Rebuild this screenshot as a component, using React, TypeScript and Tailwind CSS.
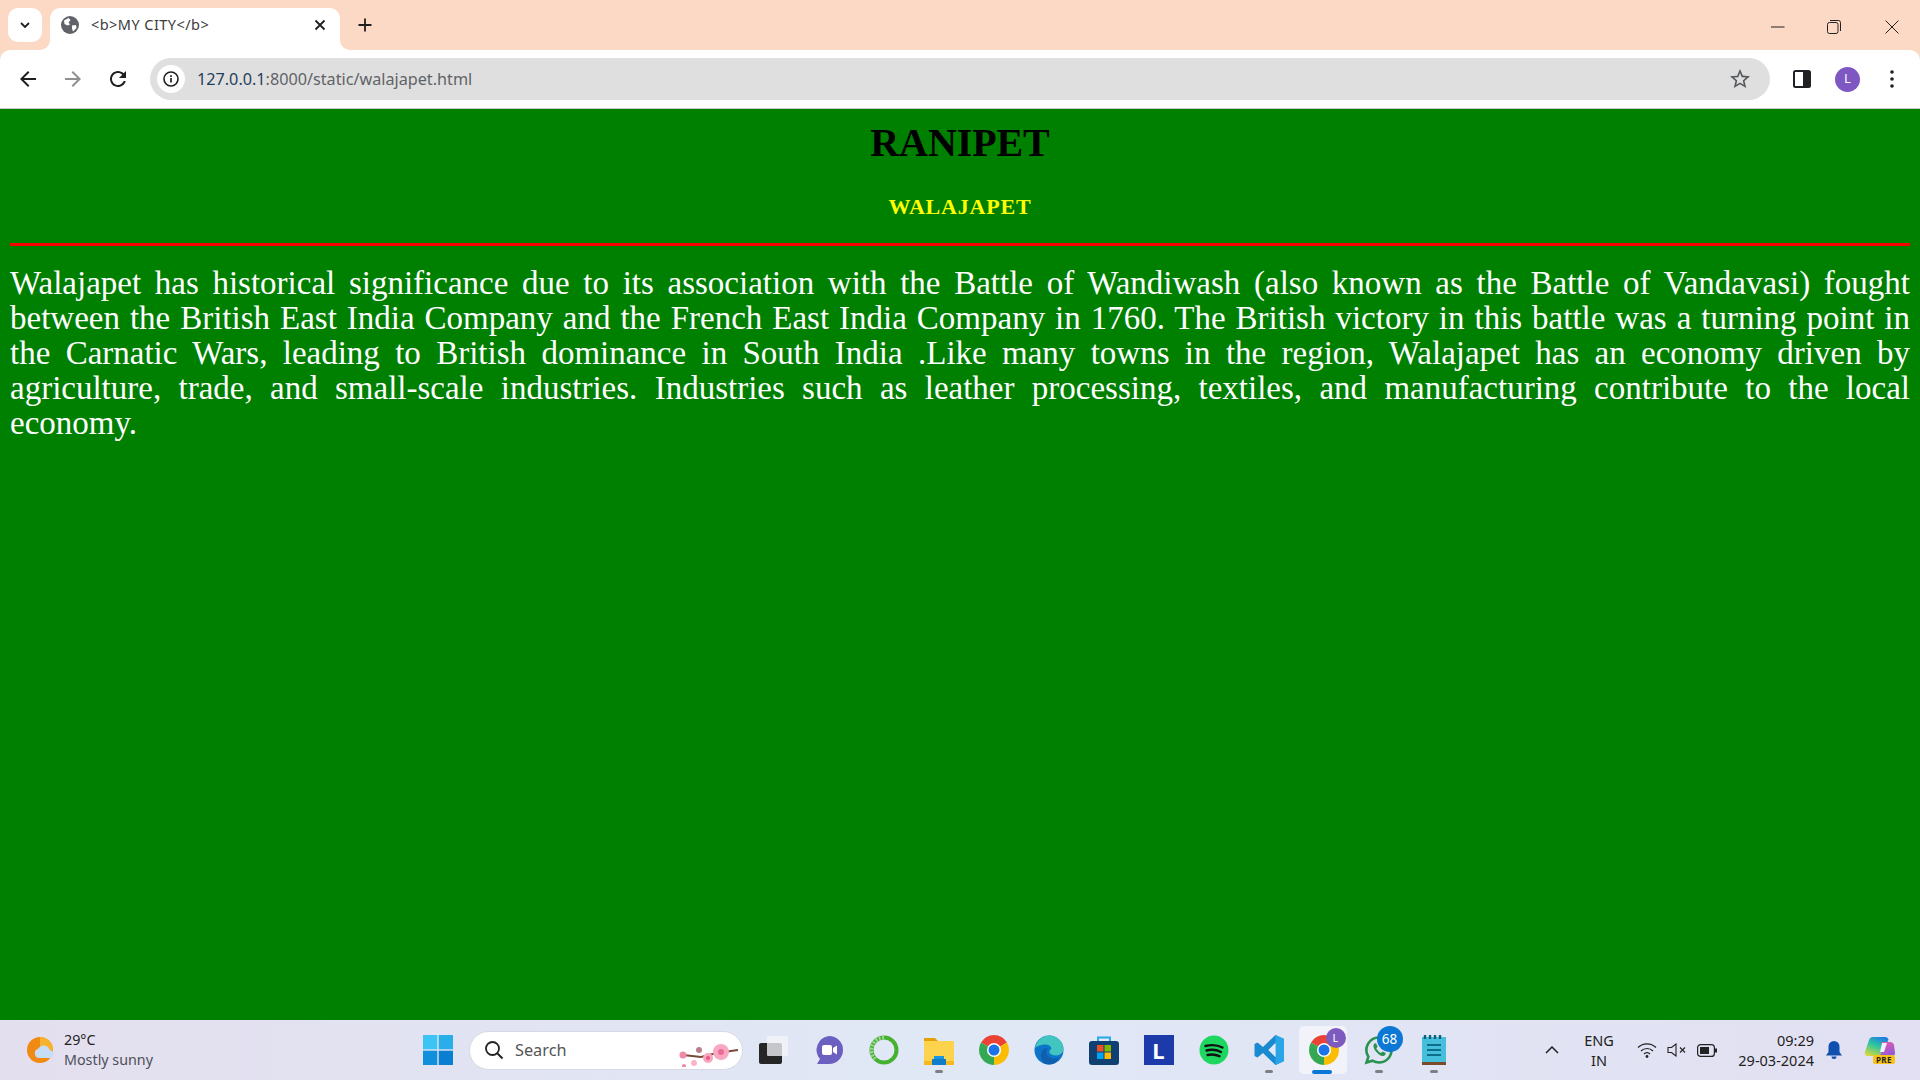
import React from "react";

const ui = "font-['Noto_Sans','Open_Sans',sans-serif]";

const Mi = ({ d, className, fill = "#1f1f1f" }: { d: string; className?: string; fill?: string }) => (
  <svg viewBox="0 0 24 24" className={className}><path d={d} fill={fill} /></svg>
);

const Chrome = ({ size = 30 }: { size?: number }) => (
  <svg width={size} height={size} viewBox="0 0 24 24">
    <path d="M12 12 L1.61 6 A12 12 0 0 1 22.39 6 Z" fill="#ea4335" />
    <path d="M12 12 L22.39 6 A12 12 0 0 1 12 24 Z" fill="#fbbc04" />
    <path d="M12 12 L12 24 A12 12 0 0 1 1.61 6 Z" fill="#34a853" />
    <circle cx="12" cy="12" r="5.6" fill="#fff" />
    <circle cx="12" cy="12" r="4.4" fill="#1a73e8" />
  </svg>
);

const Slot = ({ children, dot, active }: { children: React.ReactNode; dot?: boolean; active?: boolean }) => (
  <div className="relative flex h-[60px] w-[55px] shrink-0 items-center justify-center">
    {active && <div className="absolute left-[3px] top-[6px] h-[48px] w-[48px] rounded-[5px] bg-[#f2f3fa]" />}
    <div className="relative flex items-center justify-center">{children}</div>
    {dot && <div className="absolute bottom-[7px] left-1/2 h-[3px] w-[8px] -translate-x-1/2 rounded-full bg-[#7d7f85]" />}
    {active && <div className="absolute bottom-[6px] left-[16px] h-[4px] w-[20px] rounded-full bg-[#0a78d4]" />}
  </div>
);

const lines = [
  "Walajapet has historical significance due to its association with the Battle of Wandiwash (also known as the Battle of Vandavasi) fought",
  "between the British East India Company and the French East India Company in 1760. The British victory in this battle was a turning point in",
  "the Carnatic Wars, leading to British dominance in South India .Like many towns in the region, Walajapet has an economy driven by",
  "agriculture, trade, and small-scale industries. Industries such as leather processing, textiles, and manufacturing contribute to the local",
];

export default function App() {
  return (
    <div className="flex h-[1080px] w-[1920px] flex-col overflow-hidden bg-[#fcd9c5]">
      {/* tab strip */}
      <div className="flex h-[50px] shrink-0 items-end pl-[8px]">
        <div className="mb-[8px] flex h-[34px] w-[34px] items-center justify-center rounded-[10px] bg-white">
          <svg viewBox="0 0 12 12" className="h-[12px] w-[12px]"><path d="M2 4l4 4 4-4" fill="none" stroke="#1f1f1f" strokeWidth="1.8" /></svg>
        </div>
        <div className={`relative ml-[8px] flex h-[42px] w-[290px] items-center rounded-t-[10px] bg-white pb-[8px] pl-[11px] ${ui}`}>
          <svg viewBox="0 0 10 10" className="absolute bottom-0 left-[-10px] h-[10px] w-[10px]"><path d="M10 0v10H0a10 10 0 0 0 10-10z" fill="#fff" /></svg>
          <svg viewBox="0 0 10 10" className="absolute bottom-0 right-[-10px] h-[10px] w-[10px]"><path d="M0 0v10h10A10 10 0 0 1 0 0z" fill="#fff" /></svg>
          <svg viewBox="0 0 18 18" className="h-[18px] w-[18px]">
            <circle cx="9" cy="9" r="9" fill="#5f6368" />
            <path d="M3 4.5 7.5 2l2 2-2 2.5 1.5 2-2.5 1L3.5 8zM11 9.5l4-.5.5 3-3.5 3.5-1-3z" fill="#fff" />
          </svg>
          <span className="ml-[12px] text-[14.5px] tracking-[0.45px] text-[#3c3c3c]">{"<b>MY CITY</b>"}</span>
          <svg viewBox="0 0 12 12" className="absolute left-[264px] top-[11px] h-[12px] w-[12px]"><path d="M1.5 1.5l9 9M10.5 1.5l-9 9" stroke="#1f1f1f" strokeWidth="1.8" /></svg>
        </div>
        <svg viewBox="0 0 14 14" className="mb-[18px] ml-[18px] h-[14px] w-[14px]"><path d="M7 .5v13M.5 7h13" stroke="#1f1f1f" strokeWidth="1.8" /></svg>
        <div className="mb-[16px] ml-auto flex items-center">
          <svg viewBox="0 0 14 14" className="h-[14px] w-[14px]"><path d="M0 7h13.5" stroke="#222" strokeWidth="1" /></svg>
          <svg viewBox="0 0 14 14" className="ml-[42px] h-[14px] w-[14px]"><rect x=".5" y="2.5" width="10.5" height="11" rx="2" fill="none" stroke="#222" /><path d="M3 .5h8.5a2 2 0 0 1 2 2V11" fill="none" stroke="#222" /></svg>
          <svg viewBox="0 0 14 14" className="ml-[44px] mr-[21px] h-[14px] w-[14px]"><path d="M.5.5l13 13M13.5.5l-13 13" stroke="#222" strokeWidth="1" /></svg>
        </div>
      </div>

      {/* toolbar */}
      <div className="flex h-[58px] shrink-0 items-center rounded-t-[10px] bg-white">
        <Mi d="M20 11H7.83l5.59-5.59L12 4l-8 8 8 8 1.41-1.41L7.83 13H20v-2z" className="ml-[16px] h-[24px] w-[24px]" />
        <Mi d="M4 11h12.17l-5.59-5.59L12 4l8 8-8 8-1.41-1.41L16.17 13H4v-2z" fill="#8f8f8f" className="ml-[21px] h-[24px] w-[24px]" />
        <Mi d="M17.65 6.35C16.2 4.9 14.21 4 12 4c-4.42 0-7.99 3.58-7.99 8s3.57 8 7.99 8c3.73 0 6.84-2.55 7.73-6h-2.08c-.82 2.33-3.04 4-5.65 4-3.31 0-6-2.69-6-6s2.69-6 6-6c1.66 0 3.14.69 4.22 1.78L13 11h7V4l-2.35 2.35z" className="ml-[21px] h-[24px] w-[24px]" />
        <div className={`ml-[20px] flex h-[42px] w-[1620px] items-center rounded-full bg-[#dfdfdf] pl-[7px] ${ui}`}>
          <div className="flex h-[28px] w-[28px] items-center justify-center rounded-full bg-white">
            <svg viewBox="0 0 16 16" className="h-[16px] w-[16px]"><circle cx="8" cy="8" r="7" fill="none" stroke="#1f1f1f" strokeWidth="1.6" /><path d="M8 7v4.6M8 4.2v1.7" stroke="#1f1f1f" strokeWidth="1.7" /></svg>
          </div>
          <span className="ml-[12px] pt-[1px] text-[16.2px] text-[#1f3f5c]">127.0.0.1<span className="text-[#5f6368]">:8000/static/walajapet.html</span></span>
          <Mi d="M22 9.24l-7.19-.62L12 2 9.19 8.63 2 9.24l5.46 4.73L5.82 21 12 17.27 18.18 21l-1.63-7.03L22 9.24zM12 15.4l-3.76 2.27 1-4.28-3.32-2.88 4.38-.38L12 6.1l1.71 4.04 4.38.38-3.32 2.88 1 4.28L12 15.4z" fill="#55585c" className="ml-auto mr-[18px] h-[24px] w-[24px]" />
        </div>
        <svg viewBox="0 0 18 18" className="ml-[23px] h-[18px] w-[18px]"><rect width="18" height="18" rx="2.5" fill="#1f2125" /><rect x="2" y="2" width="8" height="14" fill="#fff" /></svg>
        <div className={`ml-[24px] flex h-[25px] w-[25px] items-center justify-center rounded-full bg-[#7e57c2] text-[13px] text-white ${ui}`}>L</div>
        <svg viewBox="0 0 4 18" className="ml-[30px] h-[18px] w-[4px]"><circle cx="2" cy="2" r="1.8" fill="#1f1f1f" /><circle cx="2" cy="9" r="1.8" fill="#1f1f1f" /><circle cx="2" cy="16" r="1.8" fill="#1f1f1f" /></svg>
      </div>

      {/* page */}
      <main className="h-[912px] shrink-0 border-t border-[#c9c9c9] bg-[#008000] px-[10px] font-['Liberation_Serif',serif]">
        <h1 className="mt-[15px] text-center text-[40px] font-bold leading-[38px] tracking-[-0.1px] text-black">RANIPET</h1>
        <h2 className="mt-[32px] text-center text-[22px] font-bold leading-[26px] tracking-[0.8px] text-[#ffff00]">WALAJAPET</h2>
        <hr className="mt-[23px] h-[3px] border-0 bg-[#ff0000]" />
        <div className="mt-[20px] text-[33px] leading-[35px] text-white">
          {lines.map((l) => (
            <div key={l} className="whitespace-nowrap text-justify [text-align-last:justify]">{l}</div>
          ))}
          <div>economy.</div>
        </div>
      </main>

      {/* taskbar */}
      <footer className={`flex h-[60px] shrink-0 items-center bg-gradient-to-r from-[#e4dfef] via-[#e0e8f6] to-[#e2e0f2] ${ui}`}>
        <div className="flex w-[423px] shrink-0 items-center pl-[27px]">
          <svg viewBox="0 0 28 28" className="h-[28px] w-[28px]">
            <circle cx="13" cy="14" r="13" fill="#f08a12" />
            <path d="M13 1a13 13 0 0 1 13 13H13z" fill="#f7b32b" />
            <path d="M11 22a5 5 0 0 1 .5-9.5 6 6 0 0 1 11 1.5 4 4 0 0 1 0 8z" fill="#c7ddf5" />
          </svg>
          <div className="ml-[9px] text-[14.3px] leading-[20px]">
            <div className="text-[#222]">29°C</div>
            <div className="text-[#4c4f57]">Mostly sunny</div>
          </div>
        </div>
        <svg viewBox="0 0 30 30" className="h-[30px] w-[30px] shrink-0">
          <rect width="14.3" height="14.3" fill="#3cc4f5" /><rect x="15.7" width="14.3" height="14.3" fill="#2aaeea" />
          <rect y="15.7" width="14.3" height="14.3" fill="#0f8fdc" /><rect x="15.7" y="15.7" width="14.3" height="14.3" fill="#0a7fd2" />
        </svg>
        <div className="relative ml-[16px] flex h-[39px] w-[274px] shrink-0 items-center rounded-full border border-[#d6d9e2] bg-white pl-[14px]">
          <svg viewBox="0 0 20 20" className="h-[20px] w-[20px]"><circle cx="8.5" cy="8.5" r="6.5" fill="none" stroke="#222" strokeWidth="1.8" /><path d="M13 13l5.500 5.500" stroke="#222" strokeWidth="2" /></svg>
          <span className="ml-[11px] text-[16.3px] text-[#555]">Search</span>
          <svg viewBox="0 0 62 24" className="absolute right-[3px] top-[11px] h-[24px] w-[62px]">
            <path d="M6 12 L24 14 L40 10 L61 7" fill="none" stroke="#7a4a3e" strokeWidth="2" />
            <circle cx="6" cy="12" r="3.500" fill="#f08aa8" />
            <circle cx="22" cy="7" r="3" fill="#b98088" />
            <circle cx="31" cy="15" r="5" fill="#f7a6bc" /><circle cx="31" cy="15" r="2" fill="#e8558a" />
            <circle cx="44" cy="9" r="8" fill="#f9a8c0" /><circle cx="44" cy="9" r="3" fill="#ea6a9a" />
            <circle cx="7" cy="23" r="2" fill="#f58aa8" /><circle cx="17" cy="20" r="3" fill="#f9b4c8" />
          </svg>
        </div>
        <div className="ml-[3px] flex shrink-0">
          <Slot>
            <svg viewBox="0 0 29 28" className="h-[28px] w-[29px]">
              <rect x="0" y="7" width="23" height="21" rx="2" fill="#262626" />
              <rect x="8" y="0" width="21" height="20" rx="1" fill="#f4f5f8" fillOpacity="0.78" />
            </svg>
          </Slot>
          <Slot>
            <svg viewBox="0 0 30 30" className="h-[30px] w-[30px]"><path d="M15 1a14 14 0 0 1 0 28H3l3-5A14 14 0 0 1 15 1z" fill="#6b5fc0" /><rect x="8" y="10" width="10" height="10" rx="2" fill="#fff" /><path d="M19 13l4-2.500v9L19 17z" fill="#fff" /></svg>
          </Slot>
          <Slot>
            <svg viewBox="0 0 30 30" className="h-[30px] w-[30px]"><circle cx="15" cy="15" r="12.500" fill="none" stroke="#46b02f" strokeWidth="4" /><path d="M15 2.500A12.500 12.500 0 0 0 6 24" fill="none" stroke="#9fd39a" strokeWidth="4" strokeDasharray="2 1.500" /></svg>
          </Slot>
          <Slot dot>
            <svg viewBox="0 0 30 30" className="h-[30px] w-[30px]"><path d="M0 3h11l3 3h16v5H0z" fill="#e3a008" /><rect y="6" width="30" height="24" fill="#fdd34d" /><rect y="26" width="30" height="4" fill="#f5b81f" /><path d="M8 24h14v6H8z" fill="#0f7dc9" /><rect x="10" y="21" width="10" height="3" fill="#1a95e0" /></svg>
          </Slot>
          <Slot><Chrome /></Slot>
          <Slot>
            <svg viewBox="0 0 30 30" className="h-[30px] w-[30px]"><circle cx="15" cy="15" r="14.500" fill="#0c75c9" /><path d="M1 13C3 4 10 .5 15 .5c8 0 14.500 6 14.500 13 0 4-3 7-7.500 7-3 0-6-1-6.500-3-.5-1.500 1-3 2-4-1-3-3-4-6-4-5 0-9 2-10.500 3.500z" fill="#42c5c0" /><path d="M15 29.500c-6 0-8-5-8-9 0-4 3-7.500 7-7.500-2 2-2.500 5 0 8 2 2.500 7 3.500 12 1-2 4-6 7.500-11 7.500z" fill="#0f5fae" /></svg>
          </Slot>
          <Slot>
            <svg viewBox="0 0 30 30" className="h-[30px] w-[30px]"><path d="M9 6V2.500h12V6" fill="none" stroke="#29a8e8" strokeWidth="2" /><rect y="6" width="30" height="24" rx="3" fill="#103f72" /><rect x="8" y="10" width="6.500" height="6.500" fill="#ee4f25" /><rect x="15.500" y="10" width="6.500" height="6.500" fill="#7fba00" /><rect x="8" y="17.500" width="6.500" height="6.500" fill="#00a4ef" /><rect x="15.500" y="17.500" width="6.500" height="6.500" fill="#ffb900" /></svg>
          </Slot>
          <Slot>
            <div className="flex h-[30px] w-[30px] items-center justify-center bg-[#1c3aa9] text-[22px] font-bold leading-none text-white">L</div>
          </Slot>
          <Slot>
            <svg viewBox="0 0 30 30" className="h-[30px] w-[30px]"><circle cx="15" cy="15" r="14.500" fill="#1ed760" /><path d="M6.500 11c6-1.500 12-1 17 1.500M7.500 15.500c5-1.200 10-.8 14.500 1.500M8.500 20c4-1 8-.6 12 1.200" fill="none" stroke="#111" strokeWidth="2.400" strokeLinecap="round" /></svg>
          </Slot>
          <Slot dot>
            <svg viewBox="0 0 30 30" className="h-[30px] w-[30px]"><path d="M21.500 0 30 4v22l-8.500 4L9 18l-5.500 4.500L.5 21V9l3-1.500L9 12zM21.500 8l-7 7 7 7z" fill="#1a8ad0" /><path d="M21.500 0 30 4v22l-8.500 4z" fill="#29a6e8" /><path d="M21.500 22V8l-7 7z" fill="#e0e8f6" /></svg>
          </Slot>
          <Slot active>
            <Chrome />
            <div className="absolute right-[-7px] top-[-7px] flex h-[20px] w-[20px] items-center justify-center rounded-full bg-[#7d5bbe] text-[11px] text-white">L</div>
          </Slot>
          <Slot dot>
            <svg viewBox="0 0 30 30" className="h-[30px] w-[30px]"><path d="M15 2.500a12.500 12.500 0 0 1 0 25 12.500 12.500 0 0 1-6.500-1.800L2.500 27.500l1.900-5.800A12.500 12.500 0 0 1 15 2.500z" fill="none" stroke="#2a9250" strokeWidth="2.600" /><path d="M10.500 8.500c-1.500 1.500-1.500 4 1 7.500s6 5.500 8 5c1.500-.4 2.500-2 2.200-3l-3.200-1.600-1.500 1.500c-2-.8-3.700-2.500-4.700-4.700l1.400-1.500L12 8.200z" fill="#2a9250" /></svg>
            <div className="absolute right-[-9px] top-[-9px] flex h-[26px] w-[26px] items-center justify-center rounded-full bg-[#0a78d4] text-[13.5px] text-white">68</div>
          </Slot>
          <Slot dot>
            <svg viewBox="0 0 24 30" className="h-[30px] w-[24px]"><rect y="2" width="24" height="26" fill="#45bfdc" /><rect y="27" width="24" height="3" fill="#7a4a2b" /><path d="M3 0v4M8 0v4M13 0v4M18 0v4" stroke="#0f5f7a" strokeWidth="2.400" /><path d="M5 10h14M5 15h14M5 20h14" stroke="#0f6d8c" strokeWidth="2" /></svg>
          </Slot>
        </div>

        <div className="ml-auto flex items-center text-[#222]">
          <svg viewBox="0 0 14 8" className="h-[8px] w-[14px]"><path d="M1 7l6-6 6 6" fill="none" stroke="#222" strokeWidth="1.500" /></svg>
          <div className="ml-[20px] w-[40px] text-center text-[14.500px] leading-[20px]"><div>ENG</div><div>IN</div></div>
          <svg viewBox="0 0 20 16" className="ml-[18px] h-[16px] w-[20px]"><path d="M1 5.500a13 13 0 0 1 18 0M4 9a8.500 8.500 0 0 1 12 0M7 12a4 4 0 0 1 6 0" fill="none" stroke="#222" strokeWidth="1.200" /><circle cx="10" cy="14.500" r="1.400" fill="#222" /></svg>
          <svg viewBox="0 0 20 14" className="ml-[10px] h-[14px] w-[20px]"><path d="M1 4.500h3.500L9 1v12L4.500 9.500H1z" fill="none" stroke="#222" strokeWidth="1.100" /><path d="M13 4.500l5 5M18 4.500l-5 5" stroke="#222" strokeWidth="1.100" /></svg>
          <svg viewBox="0 0 20 13" className="ml-[10px] h-[13px] w-[20px]"><rect x=".6" y=".6" width="16.800" height="11.800" rx="3" fill="none" stroke="#222" strokeWidth="1.200" /><rect x="3" y="3" width="9" height="7" fill="#222" /><rect x="18" y="4.500" width="2" height="4" fill="#222" /></svg>
          <div className="ml-[10px] w-[87px] text-right text-[14.500px] leading-[20px]"><div>09:29</div><div>29-03-2024</div></div>
          <svg viewBox="0 0 16 18" className="ml-[12px] h-[18px] w-[16px]"><path d="M8 0a5.500 5.500 0 0 1 5.500 5.500V11l2.500 3.500H0L2.500 11V5.500A5.500 5.500 0 0 1 8 0z" fill="#0f4fb0" /><path d="M5.500 15.500h5a2.500 2.500 0 0 1-5 0z" fill="#0f4fb0" /></svg>
          <div className="relative ml-[23px] mr-[25px] h-[28px] w-[30px]">
            <svg viewBox="0 0 30 20" className="h-[20px] w-[30px]">
              <defs>
                <linearGradient id="cpL" x1="0.7" y1="0" x2="0.2" y2="1">
                  <stop offset="0" stopColor="#1f7fe0" /><stop offset="0.45" stopColor="#2ec5a0" /><stop offset="1" stopColor="#d9d83a" />
                </linearGradient>
                <linearGradient id="cpR" x1="0.2" y1="0" x2="0.8" y2="1">
                  <stop offset="0" stopColor="#e85aa8" /><stop offset="1" stopColor="#8a5ae0" />
                </linearGradient>
              </defs>
              <path d="M8 1h12c2 0 3 1 3.500 2.500L18 17c-.6 2-2 3-4 3H3c-2.500 0-3.500-2-3-4L4 4c.6-2 2-3 4-3z" fill="url(#cpL)" />
              <path d="M17 6h8c2 0 3.500 1 4 3l1 8c0 2-1 3-3 3H14l2-2z" fill="url(#cpR)" />
              <path d="M17 7h5l-3 9h-4z" fill="#f2f2fa" />
            </svg>
            <div className="absolute bottom-0 right-0 flex h-[9px] w-[22px] items-center justify-center rounded-[2px] bg-[#f7c21a] text-[8px] font-bold leading-none tracking-[0.5px] text-[#222]">PRE</div>
          </div>
        </div>
      </footer>
    </div>
  );
}
